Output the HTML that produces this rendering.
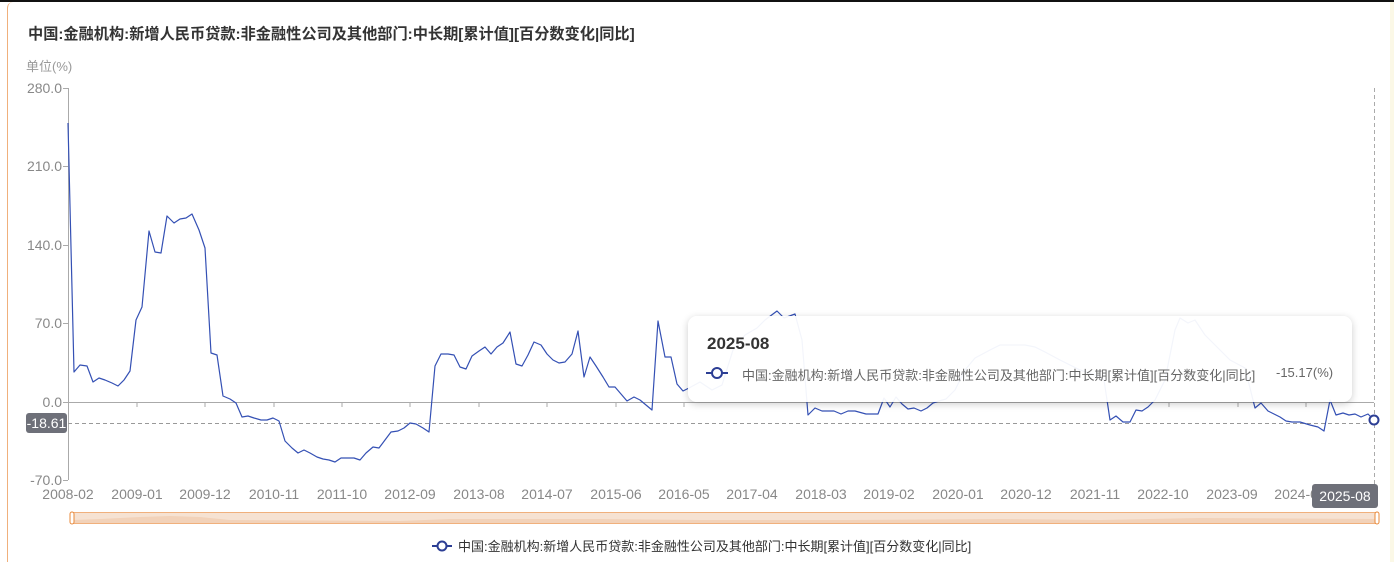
<!DOCTYPE html>
<html><head><meta charset="utf-8"><style>
html,body{margin:0;padding:0;background:#fff;width:1394px;height:562px;overflow:hidden;position:relative;font-family:"Liberation Sans","Noto Sans CJK SC",sans-serif}
.t{position:absolute;white-space:nowrap}
</style></head><body>
<div style="position:absolute;left:0;top:0;width:1394px;height:2px;background:#111"></div>
<div style="position:absolute;left:7px;top:2px;width:1383px;height:570px;border-left:1px solid #f0b07c;border-top-left-radius:6px"></div>
<div style="position:absolute;left:1390px;top:2px;width:4px;height:560px;background:#fbf8e6"></div>
<div class="t" style="left:28px;top:22px;font-size:15.2px;font-weight:bold;color:#333">中国:金融机构:新增人民币贷款:非金融性公司及其他部门:中长期[累计值][百分数变化|同比]</div>
<div class="t" style="left:26px;top:56px;font-size:13px;color:#999">单位(%)</div>
<svg width="1394" height="562" style="position:absolute;left:0;top:0" font-family="Liberation Sans, Noto Sans CJK SC, sans-serif">
<g font-size="14" fill="#888" text-anchor="end">
<text x="62" y="93">280.0</text><text x="62" y="171">210.0</text><text x="62" y="250">140.0</text><text x="62" y="328">70.0</text><text x="62" y="407">0.0</text><text x="62" y="485">-70.0</text>
</g>
<g stroke="#aaa" stroke-width="1">
<line x1="68.5" y1="88" x2="68.5" y2="480"/>
<line x1="63" y1="88.5" x2="68" y2="88.5"/><line x1="63" y1="166.5" x2="68" y2="166.5"/><line x1="63" y1="245.5" x2="68" y2="245.5"/><line x1="63" y1="323.5" x2="68" y2="323.5"/><line x1="63" y1="480.5" x2="68" y2="480.5"/>
<line x1="63" y1="402.5" x2="1374" y2="402.5"/>
</g>
<g stroke="#aaa">
<line x1="137" y1="402" x2="137" y2="407"/><line x1="205" y1="402" x2="205" y2="407"/><line x1="274" y1="402" x2="274" y2="407"/><line x1="342" y1="402" x2="342" y2="407"/><line x1="410" y1="402" x2="410" y2="407"/><line x1="479" y1="402" x2="479" y2="407"/><line x1="547" y1="402" x2="547" y2="407"/><line x1="616" y1="402" x2="616" y2="407"/><line x1="684" y1="402" x2="684" y2="407"/><line x1="1169" y1="402" x2="1169" y2="407"/><line x1="1238" y1="402" x2="1238" y2="407"/><line x1="1306" y1="402" x2="1306" y2="407"/>
</g>
<g font-size="14" fill="#888" text-anchor="middle">
<text x="68" y="499">2008-02</text><text x="137" y="499">2009-01</text><text x="205" y="499">2009-12</text><text x="274" y="499">2010-11</text><text x="342" y="499">2011-10</text><text x="410" y="499">2012-09</text><text x="479" y="499">2013-08</text><text x="547" y="499">2014-07</text><text x="616" y="499">2015-06</text><text x="684" y="499">2016-05</text><text x="752" y="499">2017-04</text><text x="821" y="499">2018-03</text><text x="889" y="499">2019-02</text><text x="958" y="499">2020-01</text><text x="1026" y="499">2020-12</text><text x="1095" y="499">2021-11</text><text x="1163" y="499">2022-10</text><text x="1232" y="499">2023-09</text><text x="1300" y="499">2024-08</text>
</g>
<line x1="68" y1="423.5" x2="1374" y2="423.5" stroke="#999" stroke-dasharray="4,3"/>
<line x1="1374.5" y1="88" x2="1374.5" y2="484" stroke="#aaa" stroke-dasharray="4,3"/>
<polyline fill="none" stroke="#3450b4" stroke-width="1.2" stroke-linejoin="round" points="68,123 74,372 80,365 87,366 93,382 99,378 105,380 112,383 118,386 124,380 130,371 136,320 142,307 149,231 155,252 161,253 167,216 174,223 180,219 186,218 192,214 199,230 205,248 211,353 217,355 223,396 230,399 236,403 242,417 248,416 254,418 261,420 267,420 273,418 279,421 285,441 292,448 298,453 304,450 310,453 317,457 323,459 329,460 335,462 341,458 348,458 354,458 360,460 366,453 373,447 379,448 385,440 391,432 398,431 404,428 410,423 416,424 423,428 429,432 435,366 441,354 448,354 454,355 460,367 466,369 472,356 479,351 485,347 491,354 497,347 503,343 510,332 516,364 522,366 528,355 534,342 541,345 547,354 553,360 559,363 565,362 572,354 578,331 584,377 590,357 596,366 603,377 609,387 615,387 621,394 627,401 634,397 640,400 646,405 652,410 658,321 665,357 671,357 677,384 683,391 689,388 700,382 712,390 722,385 733,350 745,335 757,328 765,320 777,311 784,318 795,314 802,340 808,415 815,408 822,411 834,411 841,414 848,411 855,411 866,414 878,414 884,398 890,407 896,397 902,404 908,409 914,408 921,411 927,408 933,403 939,401 946,399 955,390 965,370 975,358 990,350 1000,345 1015,345 1025,345 1035,347 1045,352 1060,360 1080,370 1095,375 1104,380 1110,420 1116,416 1123,422 1130,422 1136,410 1142,411 1148,407 1155,400 1165,380 1175,330 1180,318 1188,323 1195,320 1205,335 1215,345 1230,360 1245,368 1255,408 1261,403 1268,411 1274,414 1280,417 1286,421 1292,422 1300,422 1310,425 1318,427 1324,431 1330,400 1336,415 1343,413 1349,415 1355,414 1361,417 1368,414 1374,420"/>
<circle cx="1374" cy="420" r="4.5" fill="#fff" stroke="#2c3e94" stroke-width="2"/>
<rect x="26" y="413" width="41" height="20" rx="3" fill="#6e7079"/>
<text x="46.5" y="428" font-size="14" fill="#fff" text-anchor="middle">-18.61</text>
<rect x="1312" y="484" width="66" height="24" rx="3" fill="#6e7079"/>
<text x="1345" y="501" font-size="14" fill="#fff" text-anchor="middle">2025-08</text>
<rect x="72.5" y="512.5" width="1304" height="11" fill="#f6e2d2" stroke="#f0b07c"/>
<path d="M73,520 L100,519 L140,517 L170,516 L200,517 L230,520 L400,521 L450,519 L600,519 L700,520 L850,520 L1000,519 L1100,520 L1200,518 L1376,519 L1376,523 L73,523Z" fill="#f0c8a8" opacity="0.6"/>
<rect x="70" y="512" width="4" height="12" rx="2" fill="#fff" stroke="#e8893a"/>
<rect x="1375" y="512" width="4" height="12" rx="2" fill="#fff" stroke="#e8893a"/>
<line x1="432" y1="546" x2="452" y2="546" stroke="#2c3e94" stroke-width="2"/>
<circle cx="442" cy="546" r="4.5" fill="#fff" stroke="#2c3e94" stroke-width="2"/>
<text x="458" y="551" font-size="13" fill="#333">中国:金融机构:新增人民币贷款:非金融性公司及其他部门:中长期[累计值][百分数变化|同比]</text>
</svg>
<div style="position:absolute;left:688px;top:316px;width:664px;height:86px;border-radius:9px;background:rgba(255,255,255,0.94);box-shadow:0 2px 8px rgba(0,0,0,0.2)"></div>
<div class="t" style="left:707px;top:334px;font-size:17px;font-weight:bold;color:#333">2025-08</div>
<svg width="24" height="14" style="position:absolute;left:705px;top:366px"><line x1="1" y1="7" x2="23" y2="7" stroke="#2c3e94" stroke-width="2"/><circle cx="12" cy="7" r="5" fill="#fff" stroke="#2c3e94" stroke-width="2"/></svg>
<div class="t" style="left:742px;top:365px;font-size:13px;color:#666">中国:金融机构:新增人民币贷款:非金融性公司及其他部门:中长期[累计值][百分数变化|同比]</div>
<div class="t" style="left:1276px;top:365px;font-size:13px;color:#666">-15.17(%)</div>
</body></html>
